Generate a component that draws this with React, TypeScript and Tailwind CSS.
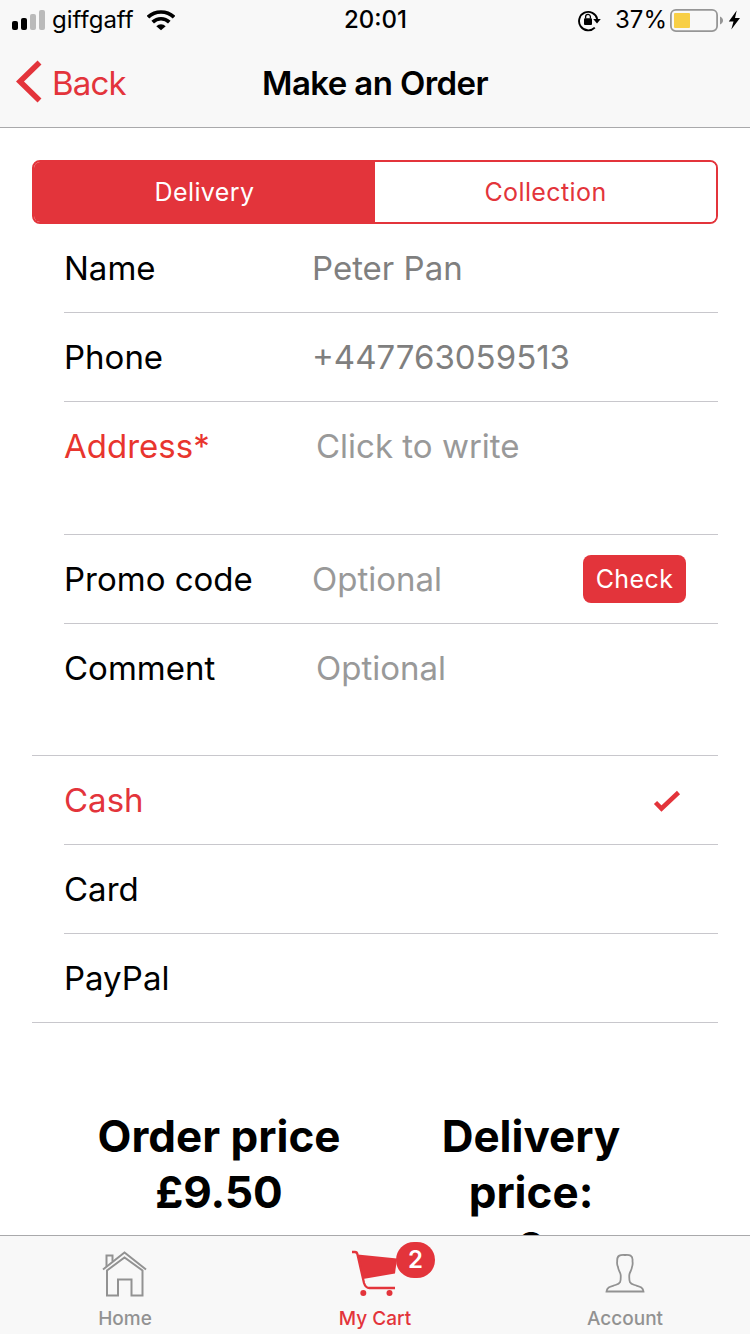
import React from "react";

function StatusBar() {
  return (
    <div className="flex h-10 items-center text-[24px] leading-10 text-black">
      <svg width="34" height="40" viewBox="0 0 34 40" className="ml-3 shrink-0">
        <rect x="0" y="21" width="6" height="9" rx="2" />
        <rect x="9" y="18" width="6" height="12" rx="2" />
        <rect x="18" y="14" width="6" height="16" rx="2" fill="#bababa" />
        <rect x="27" y="10" width="6" height="20" rx="2" fill="#bababa" />
      </svg>
      <span className="ml-1.5 w-[95px] whitespace-nowrap">giffgaff</span>
      <svg width="28" height="40" viewBox="0 0 28 40" className="shrink-0" fill="none" stroke="#000" strokeWidth="3.7">
        <path d="M1 17.2a18.8 18.8 0 0 1 26 0" />
        <path d="M5.7 22.1a12 12 0 0 1 16.6 0" />
        <path d="M9.3 26.2a6.8 6.8 0 0 1 9.4 0L14 30.3z" fill="#000" stroke="none" />
      </svg>
      <span className="ml-[169px] w-[66px] whitespace-nowrap font-medium">20:01</span>
      <svg width="24" height="40" viewBox="0 0 24 40" className="ml-[168px] shrink-0">
        <path d="M16.8 27.6A9.2 9.2 0 1 1 19.2 19" fill="none" stroke="#000" strokeWidth="1.9" />
        <path d="M15.2 19h7.6l-3.8 4.6z" />
        <rect x="6" y="18.3" width="8" height="6.7" rx="1" />
        <path d="M7.6 18.5v-1.7a2.4 2.4 0 0 1 4.8 0v1.7" fill="none" stroke="#000" strokeWidth="1.3" />
      </svg>
      <span className="ml-[13px] w-[55px] whitespace-nowrap">37%</span>
      <svg width="72" height="40" viewBox="670 0 72 40" className="shrink-0">
        <rect x="670.9" y="9.9" width="46.2" height="21.2" rx="5" fill="none" stroke="#969696" strokeWidth="1.8" />
        <rect x="674" y="13" width="16" height="15" rx="1" fill="#f8cf46" />
        <path d="M720 16.5c4 1.5 4 6.500 0 8z" fill="#969696" />
        <path d="M736.700 10.500L728.800 21.500h4.700l-2.200 8 8.700-11.500h-5z" />
      </svg>
    </div>
  );
}

function Row({ label, labelClass, children, className }: {
  label: string; labelClass: string; children?: React.ReactNode; className: string;
}) {
  return (
    <div className={"ml-8 flex border-b border-[#c8c7cc] text-[33px] leading-[88px] " + className}>
      <div className={"w-[248px] shrink-0 whitespace-nowrap " + labelClass}>{label}</div>
      {children}
    </div>
  );
}

export default function App() {
  return (
    <div className="flex h-[1334px] w-[750px] flex-col overflow-hidden bg-white font-['Inter',sans-serif] text-black">
      <header className="h-32 shrink-0 border-b border-[#a9a9ab] bg-[#f8f8f8]">
        <StatusBar />
        <div className="grid h-[87px] grid-cols-[200px_350px_200px] leading-[86px]">
          <div className="flex text-[33px] text-[#e3343b]">
            <svg width="28" height="87" viewBox="0 0 28 87" className="ml-4 shrink-0" fill="none" stroke="#e3343b" strokeWidth="5.600">
              <path d="M23.500 22.500L4 41.500l19.500 19" />
            </svg>
            <span className="ml-2 tracking-[-0.8px]">Back</span>
          </div>
          <h1 className="whitespace-nowrap text-center text-[33px] font-semibold tracking-[-0.6px]">Make an Order</h1>
        </div>
      </header>

      <main className="min-h-0 flex-1 overflow-hidden px-8 pt-8">
        <div className="grid h-16 grid-cols-2 overflow-hidden rounded-lg border-2 border-[#e3343b] text-center text-[25px] leading-[59px]">
          <button className="bg-[#e3343b] text-white"><span className="tracking-[0.4px]">Delivery</span></button>
          <button className="bg-white text-[#e3343b]"><span className="tracking-[0.4px]">Collection</span></button>
        </div>
        <Row label="Name" labelClass="" className="h-[89px]"><span className="text-[#7f7f7f]">Peter Pan</span></Row>
        <Row label="Phone" labelClass="" className="h-[89px]"><span className="text-[#7f7f7f]">+447763059513</span></Row>
        <Row label="Address*" labelClass="text-[#e8352e]" className="h-[133px]"><span className="ml-1 text-[#999]">Click to write</span></Row>
        <Row label="Promo code" labelClass="" className="h-[89px]">
          <span className="flex-1 text-[#999]">Optional</span>
          <button className="mt-5 mr-8 h-12 w-[103px] rounded-lg bg-[#e3343b] text-[25px] leading-12 tracking-[0.4px] text-white">Check</button>
        </Row>
        <div className="h-[132px] border-b border-[#c8c7cc]">
          <div className="ml-8 flex text-[33px] leading-[88px]">
            <div className="w-[252px]">Comment</div>
            <span className="text-[#999]">Optional</span>
          </div>
        </div>
        <Row label="Cash" labelClass="text-[#e3343b]" className="h-[89px]">
          <svg width="28" height="88" viewBox="0 0 28 88" className="mr-[37px] ml-auto" fill="none" stroke="#e3343b" strokeWidth="4.500">
            <path d="M2.500 46.500l6 6L25.500 36.500" />
          </svg>
        </Row>
        <Row label="Card" labelClass="" className="h-[89px]" />
        <div className="h-[89px] border-b border-[#c8c7cc] pl-8 text-[33px] leading-[88px]">PayPal</div>
        <div className="grid grid-cols-[312px_312px] justify-center pt-[85px] text-center text-[44px] leading-14 font-bold">
          <div><p>Order price</p><p>£9.50</p></div>
          <div><p>Delivery</p><p>price:</p><p>0</p></div>
        </div>
      </main>

      <nav className="grid h-[99px] shrink-0 grid-cols-3 border-t border-[#a9a9ab] bg-[#f8f8f8] text-center text-[19px] leading-6 font-medium text-[#929292]">
        <a className="flex flex-col items-center">
          <svg width="46" height="71" viewBox="102 1236 46 71" fill="none" stroke="#929292" strokeWidth="2">
            <path d="M103 1269.500L124.500 1252.500l21.500 17" />
            <path d="M106.500 1266.500v-11h6v6M107 1270.500v25h11v-16h13.500v16H142.500v-25L124.500 1257.500z" />
          </svg>
          <span>Home</span>
        </a>
        <a className="flex flex-col items-center text-[#e3343b]">
          <div className="relative h-[71px] w-[50px]">
            <svg width="50" height="71" viewBox="350 1236 50 71" fill="#e3343b">
              <path d="M357.500 1254.500L397 1258.500l-2 15L363 1279z" />
              <path d="M352 1252h3q2 0 2.500 2.500L364 1283q1.500 5 5.500 5h25.500" fill="none" stroke="#e3343b" strokeWidth="2.300" />
              <circle cx="363.300" cy="1293" r="3" /><circle cx="389.500" cy="1293" r="3" />
            </svg>
            <span className="absolute top-1.5 left-[46px] h-9 w-[39px] rounded-full bg-[#e3343b] text-[24px] leading-9 font-semibold text-white">2</span>
          </div>
          <span>My Cart</span>
        </a>
        <a className="flex flex-col items-center">
          <svg width="40" height="71" viewBox="605 1236 40 71" fill="none" stroke="#929292" strokeWidth="1.800">
            <path d="M606.500 1291.500c.5-5 5-5 9-6.500 5-1.500 5.500-3 5.200-10-.2-3-2.300-4-2.700-8-1.500-3-.8-5-.8-6-.5-7 5-6 7.800-6s8.300-1 7.500 6c0 1 .7 3-.5 6-.5 4-2.500 5-2.700 8-.3 7 .2 8.500 5.200 10 4 1.500 8.500 1.500 9 6.500z" />
          </svg>
          <span>Account</span>
        </a>
      </nav>
    </div>
  );
}
